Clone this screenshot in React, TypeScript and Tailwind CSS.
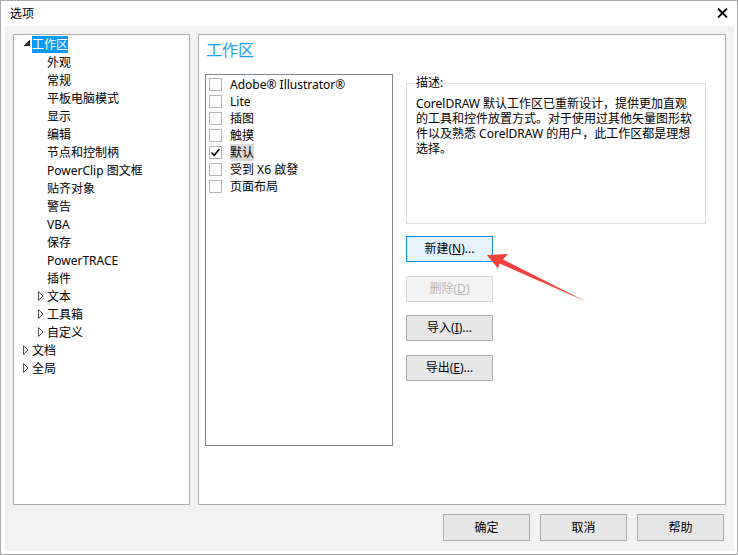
import React from "react";

const FONT = { fontFamily: '"Segoe UI", "Noto Sans", "Noto Sans CJK SC", sans-serif' };

type Node = { label: string; level: 1 | 2; state: "open" | "closed" | "leaf"; selected?: boolean };

const tree: Node[] = [
  { label: "工作区", level: 1, state: "open", selected: true },
  { label: "外观", level: 2, state: "leaf" },
  { label: "常规", level: 2, state: "leaf" },
  { label: "平板电脑模式", level: 2, state: "leaf" },
  { label: "显示", level: 2, state: "leaf" },
  { label: "编辑", level: 2, state: "leaf" },
  { label: "节点和控制柄", level: 2, state: "leaf" },
  { label: "PowerClip 图文框", level: 2, state: "leaf" },
  { label: "贴齐对象", level: 2, state: "leaf" },
  { label: "警告", level: 2, state: "leaf" },
  { label: "VBA", level: 2, state: "leaf" },
  { label: "保存", level: 2, state: "leaf" },
  { label: "PowerTRACE", level: 2, state: "leaf" },
  { label: "插件", level: 2, state: "leaf" },
  { label: "文本", level: 2, state: "closed" },
  { label: "工具箱", level: 2, state: "closed" },
  { label: "自定义", level: 2, state: "closed" },
  { label: "文档", level: 1, state: "closed" },
  { label: "全局", level: 1, state: "closed" },
];

const items = [
  { label: "Adobe® Illustrator®", checked: false },
  { label: "Lite", checked: false },
  { label: "插图", checked: false },
  { label: "触摸", checked: false },
  { label: "默认", checked: true, selected: true },
  { label: "受到 X6 啟發", checked: false },
  { label: "页面布局", checked: false },
];

const desc = [
  "CorelDRAW 默认工作区已重新设计，提供更加直观",
  "的工具和控件放置方式。对于使用过其他矢量图形软",
  "件以及熟悉 CorelDRAW 的用户，此工作区都是理想",
  "选择。",
];

function Arrow({ state }: { state: Node["state"] }) {
  if (state === "open")
    return (
      <svg width="8" height="8" className="ml-[1px] -mt-[2px]">
        <polygon points="7,0.5 7,7 0.5,7" fill="#262626" />
      </svg>
    );
  if (state === "closed")
    return (
      <svg width="7" height="10" className="ml-[1px]">
        <polygon points="0.5,0.5 5,5 0.5,9.5" fill="#fff" stroke="#505050" strokeWidth="1" />
      </svg>
    );
  return null;
}

function Btn({
  children,
  kind = "normal",
  className = "",
}: {
  children: React.ReactNode;
  kind?: "normal" | "hot" | "disabled";
  className?: string;
}) {
  const styles =
    kind === "hot"
      ? "bg-[#e5f1fb] border-[#0f8de6] text-black"
      : kind === "disabled"
      ? "bg-[#f4f4f4] border-[#d9d9d9] text-[#b4b4b4]"
      : "bg-[#e6e6e6] border-[#adadad] text-black";
  return (
    <div
      className={`flex items-center justify-center border text-[12px] leading-none ${styles} ${className}`}
    >
      {children}
    </div>
  );
}

export default function App() {
  return (
    <div
      className="relative w-[738px] h-[555px] bg-white border border-[#a9a9a9] overflow-hidden text-black"
      style={FONT}
    >
      {/* title bar */}
      <div className="h-[25px] flex items-center justify-between pl-[9px] pr-[9px]">
        <span className="text-[12px]">选项</span>
        <svg width="11" height="10" className="-mt-[2px]">
          <path d="M1 0.5 L10 9.5 M10 0.5 L1 9.5" stroke="#000" strokeWidth="1.8" />
        </svg>
      </div>

      {/* gray content */}
      <div className="ml-[4px] mr-[3px] h-[525px] bg-[#f2f2f2] pt-[8px] pl-[8px] pr-[8px] flex flex-col">
        <div className="flex h-[471px] gap-[8px]">
          {/* tree */}
          <div className="w-[177px] h-full bg-white border border-[#adadad] text-[12px]">
            {tree.map((n, i) => (
              <div
                key={i}
                className={`flex items-center h-[18px] ${n.level === 1 ? "pl-[8px]" : "pl-[23px]"}`}
              >
                <div className="w-[10px] flex items-center">
                  <Arrow state={n.state} />
                </div>
                <span
                  className={`h-[17px] leading-[17px] whitespace-nowrap ${
                    n.selected ? "bg-[#0a99f6] text-white" : ""
                  }`}
                >
                  {n.label}
                </span>
              </div>
            ))}
          </div>

          {/* right panel */}
          <div className="w-[528px] h-full bg-white border border-[#adadad] flex flex-col">
            <div className="mt-[6px] h-[18px] leading-[18px] pl-[7px] text-[16px] text-[#1b9ff0]">
              工作区
            </div>
            <div className="flex mt-[15px]">
              {/* listbox */}
              <div className="ml-[6px] w-[188px] h-[372px] border border-[#82868e] pt-[1px] pl-[3px] text-[12px]">
                {items.map((it, i) => (
                  <div key={i} className="flex items-center h-[17px]">
                    <div className="w-[13px] h-[13px] border border-[#b4b4b4] bg-white flex items-center justify-center">
                      {it.checked && (
                        <svg width="11" height="11">
                          <path
                            d="M1.5 5.5 L4.2 8.3 L9.5 2"
                            fill="none"
                            stroke="#000"
                            strokeWidth="1.5"
                          />
                        </svg>
                      )}
                    </div>
                    <span
                      className={`ml-[8px] h-[17px] leading-[17px] whitespace-nowrap ${
                        it.selected ? "bg-[#d9d9d9]" : ""
                      }`}
                    >
                      {it.label}
                    </span>
                  </div>
                ))}
              </div>

              {/* description + buttons */}
              <div className="ml-[13px] flex flex-col">
                <div className="relative mt-[9px] w-[300px] h-[141px] border border-[#dcdcdc] pt-[12px] pl-[9px] text-[12px]">
                  <span className="absolute -top-[9px] left-[8px] bg-white px-[1px] leading-[16px]">
                    描述:
                  </span>
                  {desc.map((l, i) => (
                    <div key={i} className="h-[15px] leading-[15px] whitespace-nowrap">
                      {l}
                    </div>
                  ))}
                </div>
                <Btn kind="hot" className="mt-[12px] w-[87px] h-[26px]">
                  新建(<u>N</u>)...
                </Btn>
                <Btn kind="disabled" className="mt-[14px] w-[87px] h-[26px]">
                  删除(<u>D</u>)
                </Btn>
                <Btn className="mt-[13px] w-[87px] h-[26px]">
                  导入(<u>I</u>)...
                </Btn>
                <Btn className="mt-[14px] w-[87px] h-[26px]">
                  导出(<u>E</u>)...
                </Btn>
              </div>
            </div>
          </div>
        </div>

        {/* bottom buttons */}
        <div className="mt-[9px] flex justify-end gap-[10px] mr-[2px]">
          <Btn className="w-[87px] h-[27px]">确定</Btn>
          <Btn className="w-[87px] h-[27px]">取消</Btn>
          <Btn className="w-[87px] h-[27px]">帮助</Btn>
        </div>
      </div>

      {/* red annotation arrow */}
      <svg
        className="absolute left-0 top-0 pointer-events-none"
        width="738"
        height="555"
      >
        <polygon
          points="486,254 507,253 502,258.5 586,301 498.5,262.5 497,267.5"
          fill="#f2403c"
        />
      </svg>
    </div>
  );
}
